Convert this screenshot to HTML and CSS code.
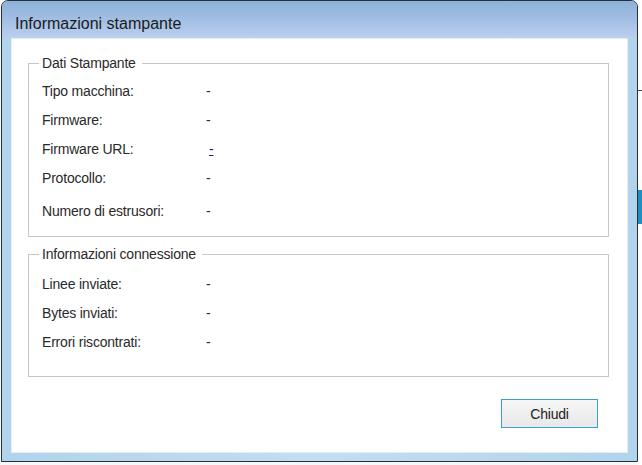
FILE: index.html
```html
<!DOCTYPE html>
<html lang="it">
<head>
  <meta charset="UTF-8">
  <meta name="viewport" content="width=device-width, initial-scale=1.0">
  <title>Informazioni stampante</title>
  <link rel="stylesheet" href="styles.css">
</head>
<body>
  <div class="back-app">
    <div class="back-line"></div>
    <div class="back-tab"></div>
  </div>

  <div class="window">
    <div class="titlebar">Informazioni stampante</div>

    <div class="client">
      <fieldset class="group">
        <legend>Dati Stampante</legend>
        <div class="row"><span>Tipo macchina:</span><span class="value">-</span></div>
        <div class="row"><span>Firmware:</span><span class="value">-</span></div>
        <div class="row"><span>Firmware URL:</span><a class="value link" href="#">-</a></div>
        <div class="row"><span>Protocollo:</span><span class="value">-</span></div>
        <div class="row spaced"><span>Numero di estrusori:</span><span class="value">-</span></div>
      </fieldset>

      <fieldset class="group connection">
        <legend>Informazioni connessione</legend>
        <div class="row"><span>Linee inviate:</span><span class="value">-</span></div>
        <div class="row"><span>Bytes inviati:</span><span class="value">-</span></div>
        <div class="row"><span>Errori riscontrati:</span><span class="value">-</span></div>
      </fieldset>

      <div class="actions">
        <button class="btn" onclick="window.close()">Chiudi</button>
      </div>
    </div>
  </div>
</body>
</html>
```

FILE: styles.css
```css
* {
  margin: 0;
  padding: 0;
  box-sizing: border-box;
}

body {
  position: relative;
  width: 642px;
  height: 465px;
  overflow: hidden;
  background: #f7f7f7;
  font-family: 'Liberation Sans', Arial, sans-serif;
  font-size: 14px;
  letter-spacing: -0.2px;
  color: #2a2a2a;
}

/* bit of the window behind, visible on the right edge */
.back-app {
  position: absolute;
  left: 638px;
  top: 0;
  width: 4px;
  height: 465px;
  background: #fff;
}

.back-line {
  margin-top: 90px;
  height: 1px;
  background: #444;
}

.back-tab {
  margin-top: 99px;
  height: 34px;
  background: #1e8fc0;
}

.window {
  display: flex;
  flex-direction: column;
  width: 637px;
  height: 462px;
  margin-left: 1px;
  border: 1px solid #22313e;
  border-radius: 7px 7px 0 0;
  background: linear-gradient(90deg, #b2d3ec, #c2def2 50%, #b2d3ec);
  overflow: hidden;
}

.titlebar {
  height: 37px;
  padding: 13px 0 0 13px;
  line-height: 20px;
  font-size: 16px;
  letter-spacing: 0;
  color: #1b1b1b;
  background: linear-gradient(#8eb1d9, #a4c0e4 55%, #bccfef);
}

.client {
  flex: 1;
  margin: 0 9px 8px;
  padding: 17px 19px 0 17px;
  background: #fff;
  box-shadow: inset 0 0 0 1px #e4eef7;
}

.group {
  border: 1px solid #c6c6c6;
  padding: 5px 0 11px 13px;
}

.group legend {
  margin-left: -3px;
  padding: 0 6px 0 3px;
  line-height: 16px;
}

.group.connection {
  margin-top: 9px;
  padding-top: 7px;
  padding-bottom: 20px;
}

.row {
  display: grid;
  grid-template-columns: 164px 1fr;
  align-items: center;
  height: 29px;
}

.row.spaced {
  margin-top: 4px;
}

.link {
  margin-left: 3px;
  color: #1c1ca8;
}

.actions {
  display: flex;
  justify-content: flex-end;
  margin-top: 22px;
  padding-right: 11px;
}

.btn {
  width: 97px;
  height: 29px;
  border: 1px solid #3aa0cf;
  background: linear-gradient(#f6f6f6, #e8e8e8);
  font-family: inherit;
  font-size: 14px;
  letter-spacing: -0.2px;
  color: #222;
  cursor: pointer;
}

.btn:hover {
  background: linear-gradient(#eaf6fd, #d9f0fc);
}
```
